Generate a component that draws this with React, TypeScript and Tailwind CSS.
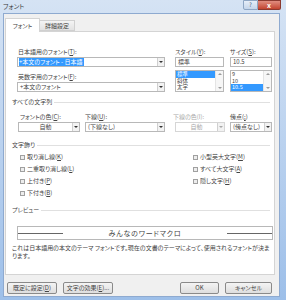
import type { ReactNode } from "react";

function Arrow({ disabled }: { disabled?: boolean }) {
  return (
    <span className="flex w-[7px] self-stretch items-center justify-center border-l border-[#d0d0d0] bg-[#f2f2f2]">
      <svg width="4" height="2" viewBox="0 0 4 2">
        <path d="M0 0h4L2 2z" fill={disabled ? "#a8a8a8" : "#333"} />
      </svg>
    </span>
  );
}

function Box({ children, className = "" }: { children?: ReactNode; className?: string }) {
  return (
    <div className={"flex h-[10px] items-center border border-[#b8b8b8] bg-white " + className}>
      {children}
    </div>
  );
}

function Group({ children, className = "" }: { children: ReactNode; className?: string }) {
  return (
    <div className={"flex h-[8px] items-center pl-[6px] pr-[4px] " + className}>
      <span>{children}</span>
      <span className="ml-[2px] h-px flex-1 bg-[#e0e0e0]" />
    </div>
  );
}

function Check({ children }: { children: ReactNode }) {
  return (
    <div className="flex h-[8px] items-center">
      <span className="h-[5px] w-[5px] border border-[#a0a0a0] bg-[#ededed]" />
      <span className="ml-[2px]">{children}</span>
    </div>
  );
}

function ScrollBar() {
  return (
    <div className="flex w-[8px] flex-col items-center justify-between border-l border-[#e4e4e4] bg-[#f6f6f6] py-[2px]">
      <svg width="4" height="2" viewBox="0 0 4 2">
        <path d="M0 2h4L2 0z" fill="#9a9a9a" />
      </svg>
      <svg width="4" height="2" viewBox="0 0 4 2">
        <path d="M0 0h4L2 2z" fill="#9a9a9a" />
      </svg>
    </div>
  );
}

function Item({ children, selected }: { children: ReactNode; selected?: boolean }) {
  return (
    <div
      className={
        "flex h-[7px] items-center overflow-hidden pl-[1px] text-[5.5px] leading-[7px] " +
        (selected ? "bg-[#3399ff] text-white" : "")
      }
    >
      {children}
    </div>
  );
}

function Btn({ children, className = "" }: { children: ReactNode; className?: string }) {
  return (
    <div
      className={
        "flex h-[12px] items-center justify-center rounded-[2px] border border-[#8a8a8a] bg-gradient-to-b from-[#f4f4f4] to-[#dedede] " +
        className
      }
    >
      {children}
    </div>
  );
}

export default function App() {
  return (
    <div className="flex h-[300px] w-[286px] flex-col overflow-hidden bg-gradient-to-b from-[#d5e3f4] to-[#9dbfe9] font-['Noto_Sans_CJK_JP',sans-serif] text-[6px] leading-[8px] text-[#444] [font-feature-settings:'palt']">
      {/* title bar */}
      <div className="flex h-[13px] shrink-0">
        <span className="ml-[3px] mt-[2px] text-[6.5px] text-[#3a3a3a]">フォント</span>
        <div className="ml-auto mr-[5px] flex h-[10px]">
          <div className="flex w-[15px] items-center justify-center rounded-bl-[2px] border border-[#8ea6c4] bg-gradient-to-b from-[#e6eef8] to-[#c4d5ea] text-[6px] text-[#4a5d78]">
            ?
          </div>
          <div className="flex w-[23px] items-center justify-center rounded-br-[2px] border border-l-0 border-[#8b3a30] bg-gradient-to-b from-[#e08d80] to-[#c2432f] text-[7px] font-bold text-white">
            x
          </div>
        </div>
      </div>

      {/* client */}
      <div className="mb-[3px] ml-[3px] mr-[6px] flex flex-1 flex-col border border-[#8eaad0] bg-[#f0f0f0]">
        {/* tabs */}
        <div className="relative z-10 ml-[1px] mt-[4px] flex h-[13px] items-end">
          <div className="-mb-[1px] flex h-[14px] w-[35px] items-center justify-center border border-b-0 border-[#d4d4d4] bg-white">
            フォント
          </div>
          <div className="flex h-[11px] w-[35px] items-center justify-center border border-l-0 border-[#d0d0d0] bg-gradient-to-b from-[#f4f4f4] to-[#e2e2e2]">
            詳細設定
          </div>
        </div>

        {/* panel */}
        <div className="ml-[1px] flex h-[244px] w-[270px] flex-col border border-[#d4d4d4] bg-white">
          {/* fonts / style / size */}
          <div className="flex pl-[11px] pt-[16px]">
            <div className="flex w-[148px] flex-col">
              <div className="pl-[1px]">
                日本語用のフォント(<u>T</u>):
              </div>
              <Box className="mt-[1px]">
                <span className="ml-[1px] bg-[#3399ff] pr-[1px] text-white">+本文のフォント - 日本語</span>
                <span className="flex-1" />
                <Arrow />
              </Box>
              <div className="mt-[6px] pl-[1px]">
                英数字用のフォント(<u>F</u>):
              </div>
              <Box className="mt-[1px]">
                <span className="ml-[2px]">+本文のフォント</span>
                <span className="flex-1" />
                <Arrow />
              </Box>
            </div>

            <div className="ml-[10px] flex w-[49px] flex-col">
              <div>
                スタイル(<u>Y</u>):
              </div>
              <Box className="mt-[1px]">
                <span className="ml-[2px]">標準</span>
              </Box>
              <div className="mt-[3px] flex h-[22px] border border-[#b8b8b8] bg-white">
                <div className="flex flex-1 flex-col">
                  <Item selected>標準</Item>
                  <Item>斜体</Item>
                  <Item>太字</Item>
                </div>
                <ScrollBar />
              </div>
            </div>

            <div className="ml-[6px] flex w-[42px] flex-col">
              <div>
                サイズ(<u>S</u>):
              </div>
              <Box className="mt-[1px]">
                <span className="ml-[2px]">10.5</span>
              </Box>
              <div className="mt-[3px] flex h-[22px] border border-[#b8b8b8] bg-white">
                <div className="flex flex-1 flex-col">
                  <Item>9</Item>
                  <Item>10</Item>
                  <Item selected>10.5</Item>
                </div>
                <ScrollBar />
              </div>
            </div>
          </div>

          {/* all text */}
          <Group className="mt-[6px]">すべての文字列</Group>
          <div className="mt-[7px] flex pl-[12px]">
            <div className="flex w-[62px] flex-col">
              <div className="pl-[2px]">
                フォントの色(<u>C</u>):
              </div>
              <Box className="mt-[1px]">
                <span className="flex-1 text-center">自動</span>
                <Arrow />
              </Box>
            </div>
            <div className="ml-[5px] flex w-[80px] flex-col">
              <div>
                下線(<u>U</u>):
              </div>
              <Box className="mt-[1px]">
                <span className="ml-[2px]">(下線なし)</span>
                <span className="flex-1" />
                <Arrow />
              </Box>
            </div>
            <div className="ml-[10px] flex w-[50px] flex-col text-[#aaa]">
              <div className="-ml-[2px]">下線の色(I):</div>
              <Box className="mt-[1px] border-[#d6d6d6] bg-[#fafafa]">
                <span className="flex-1 text-center">自動</span>
                <Arrow disabled />
              </Box>
            </div>
            <div className="ml-[5px] flex w-[42px] flex-col">
              <div>
                傍点(<u>;</u>)
              </div>
              <Box className="mt-[1px]">
                <span className="ml-[2px]">(傍点なし)</span>
                <span className="flex-1" />
                <Arrow />
              </Box>
            </div>
          </div>

          {/* effects */}
          <Group className="mt-[9px]">文字飾り</Group>
          <div className="mt-[4px] flex">
            <div className="ml-[14px] flex w-[173px] flex-col gap-[4px]">
              <Check>
                取り消し線(<u>K</u>)
              </Check>
              <Check>
                二重取り消し線(<u>L</u>)
              </Check>
              <Check>
                上付き(<u>P</u>)
              </Check>
              <Check>
                下付き(<u>B</u>)
              </Check>
            </div>
            <div className="flex flex-col gap-[4px]">
              <Check>
                小型英大文字(<u>M</u>)
              </Check>
              <Check>
                すべて大文字(<u>A</u>)
              </Check>
              <Check>
                隠し文字(<u>H</u>)
              </Check>
            </div>
          </div>

          {/* preview */}
          <Group className="mt-[9px]">プレビュー</Group>
          <div className="ml-[11px] mt-[12px] flex h-[14px] w-[256px] items-center border border-[#b8b8b8] bg-white">
            <span className="h-px w-[45px] bg-[#666]" />
            <span className="flex-1 text-center text-[7px] tracking-[0.8px] text-[#444]">みんなのワードマクロ</span>
            <span className="h-px w-[45px] bg-[#666]" />
          </div>
          <div className="mt-[4px] pl-[6px]">
            これは日本語用の本文のテーマ フォントです。現在の文書のテーマによって、使用されるフォントが決まります。
          </div>
        </div>

        {/* buttons */}
        <div className="mr-[7px] mt-[7px] flex">
          <Btn className="ml-[3px] w-[50px]">
            既定に設定(<u>D</u>)
          </Btn>
          <Btn className="ml-[6px] w-[50px]">
            文字の効果(<u>E</u>)...
          </Btn>
          <Btn className="ml-auto w-[39px] border-[#3c7fb1] from-[#eaf4fb] to-[#cfe4f5]">OK</Btn>
          <Btn className="ml-[6px] w-[47px]">キャンセル</Btn>
        </div>
      </div>
    </div>
  );
}
